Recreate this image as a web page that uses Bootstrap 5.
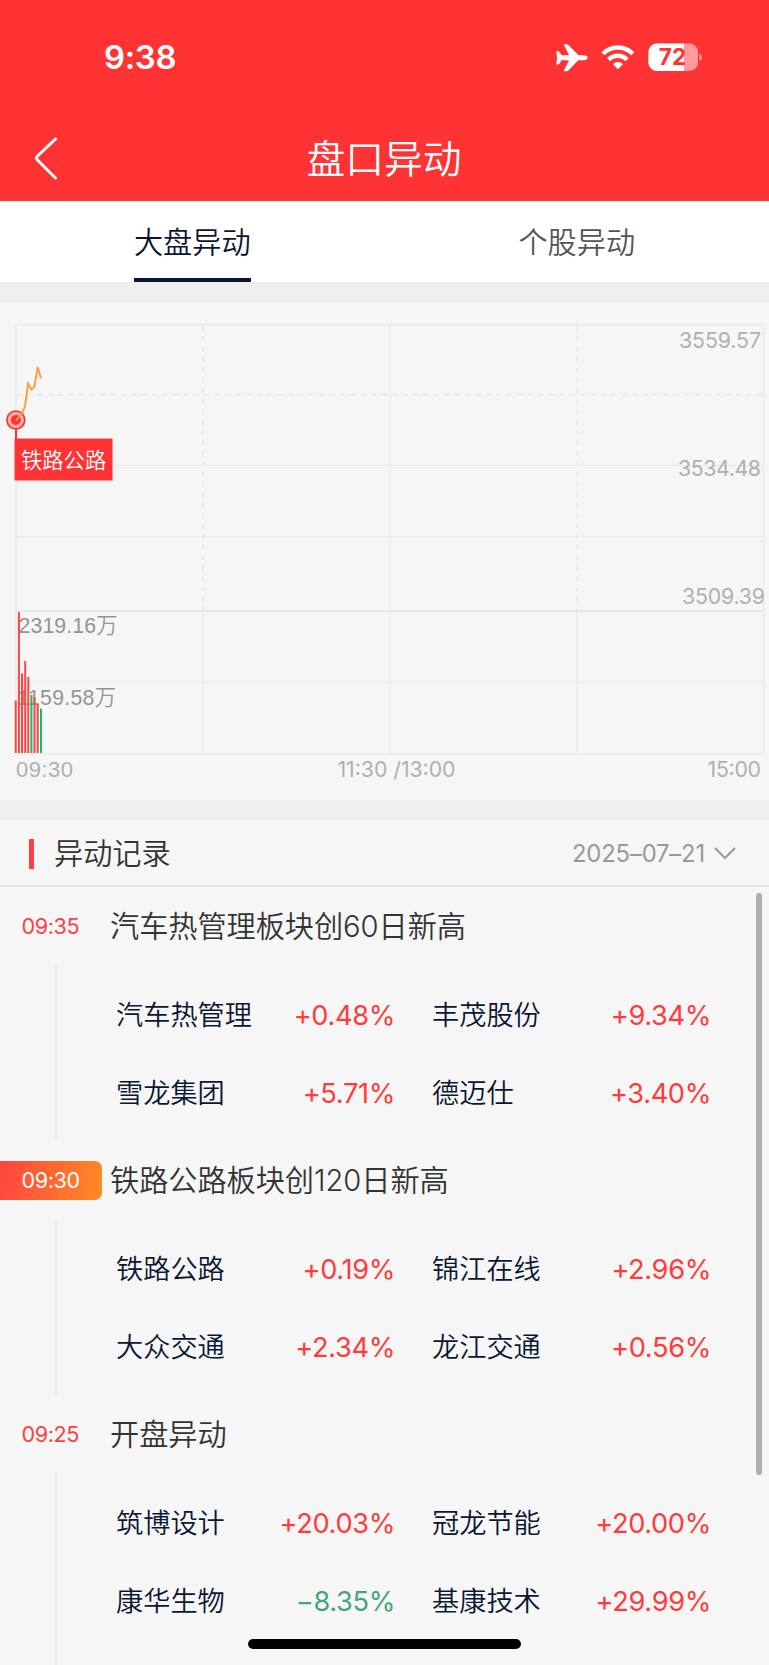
<!DOCTYPE html>
<html lang="zh-CN">
<head>
<meta charset="utf-8">
<meta name="viewport" content="width=device-width, initial-scale=1">
<title>盘口异动</title>
<link href="https://cdn.jsdelivr.net/npm/bootstrap@5.3.0/dist/css/bootstrap.min.css" rel="stylesheet">
<style>
  body { font-family: Inter, "Noto Sans CJK SC", sans-serif; background: #f6f6f6; color: #333; height: 1665px; overflow: hidden; line-height: 1; }
  .top-area { background: #f33; height: 201px; }
  .status-bar { height: 115px; padding: 0 67px 0 104px; }
  .clock { font-size: 32.8px; font-weight: 600; letter-spacing: -.3px; }
  .title-bar { height: 86px; }
  .title-bar h1 { font-size: 38.8px; font-weight: 350; margin: 2px 1px 0 0; }
  .back-btn { left: 33px; top: 20px; }
  .tab-strip { height: 81px; }
  .tab-strip .nav-link { font-size: 29.2px; color: #555; padding: 0; font-weight: 350; border-bottom: 4px solid transparent; height: 81px; line-height: 83px; }
  .tab-strip .nav-link.active { color: #0b1633; border-color: #0b1633; }
  .band { height: 20px; background: #efefef; }
  .chart-box { height: 498px; }
  .chart-box svg { display: block; }
  .log-head { height: 67px; border-bottom: 2px solid #e3e3e3; padding: 2px 33px 0 29px; }
  .log-head h2 { font-size: 29.2px; font-weight: 350; margin: 0 0 0 20px; }
  .accent { width: 5px; height: 30px; background: #ff4040; }
  .date-pick { font-size: 23.8px; font-weight: 400; letter-spacing: -.15px; color: #999; gap: 9px; }
  .log-list { height: 778px; }
  .event-head { height: 78px; }
  .time-tag { width: 102px; height: 39px; line-height: 39px; padding-left: 21.5px; font-size: 21.6px; letter-spacing: -.4px; font-weight: 400; color: #ff4040; border-radius: 0 7px 7px 0; }
  .time-tag.current { background: linear-gradient(100deg, #ff453f, #ff8a25); color: #fff; }
  .event-head h3 { font-size: 29.2px; font-weight: 350; letter-spacing: -.05px; margin: 2px 0 0 8px; }
  .event-body { height: 176px; margin-left: 55px; border-left: 2px solid #ececec; padding: 12px 0 0 59px; }
  .stock { height: 78px; font-size: 27.2px; font-weight: 350; color: #0b1633; }
  .stock-l { width: 279px; }
  .stock-r { width: 316px; padding-left: 37px; }
  .up, .down { font-weight: 400; letter-spacing: -.35px; color: #ff3b3b; }
  .down { color: #44a678; }
  .scroll-thumb { width: 6px; height: 582px; top: 6px; right: 7px; background: #aeaeae; border-radius: 3px; }
  .home-line { width: 273px; height: 10px; bottom: 16px; left: 248px; background: #000; border-radius: 5px; }
</style>
</head>
<body class="position-relative">
<header class="top-area text-white">
  <div class="status-bar d-flex align-items-center justify-content-between">
    <span class="clock">9:38</span>
    <svg width="150" height="32" viewBox="552 42 150 32" fill="#fff">
      <path d="M556.300 51h1.700q.7 0 1.200.7l2.600 3.600 7.200-.4-5-9.700q-.4-1 .6-1h2.400q.8 0 1.400.7l9.800 10.200 5.600.1c2.400 0 3.900 1.100 3.900 2.500s-1.500 2.500-3.900 2.500l-5.600.1-9.800 10.200q-.6.700-1.400.7h-2.400q-1 0-.6-1l5-9.700-7.200-.4-2.600 3.600q-.5.700-1.200.7h-1.700l.7-6.700z"/>
      <g fill="none" stroke="#fff" stroke-width="4.400">
        <path d="M603 53.700a21 21 0 0 1 29.700 0"/>
        <path d="M608.600 59.600a13 13 0 0 1 18.500 0"/>
      </g>
      <path d="M617.900 69.200l-5-5a7 7 0 0 1 10 0z"/>
      <rect x="648.500" y="43.500" width="49.500" height="27.500" rx="8.500" fill="#ff9b9b"/>
      <path d="M657 43.500h27V71h-27a8.500 8.500 0 0 1-8.500-8.500V52a8.500 8.500 0 0 1 8.500-8.500z"/>
      <path d="M699.300 53.500c3.500 1 3.500 6.500 0 7.500z" fill="#ff9b9b"/>
      <text x="672.500" y="65.300" font-size="22.500" font-weight="700" fill="#f33" text-anchor="middle">72</text>
    </svg>
  </div>
  <div class="title-bar position-relative d-flex align-items-center justify-content-center">
    <svg class="back-btn position-absolute" width="28" height="46" fill="none" stroke="#fff" stroke-width="3" stroke-linecap="round" stroke-linejoin="round"><path d="M22.500 4 4.500 21q-2 2 0 4L22.500 43"/></svg>
    <h1>盘口异动</h1>
  </div>
</header>

<nav class="nav tab-strip bg-white">
  <div class="nav-item w-50 d-flex justify-content-center"><a class="nav-link active" href="#">大盘异动</a></div>
  <div class="nav-item w-50 d-flex justify-content-center"><a class="nav-link" href="#">个股异动</a></div>
</nav>
<div class="band"></div>

<section class="chart-box">
  <svg width="769" height="498" viewBox="0 302 769 498">
    <g fill="none" stroke="#e8e8e8" stroke-width="1.200">
      <rect x="16" y="324.500" width="747.500" height="429.500"/>
      <path d="M16 465.500H763M16 536.500H763M16 682H763M390 325V754M203 611V754M577 611V754"/>
      <path d="M16 611H763" stroke-width="2"/>
      <path d="M16 395H763M203 325V611M577 325V611" stroke-width="1.800" stroke="#ebebeb" stroke-dasharray="6 5.500 4 5.500 6 4.300"/>
    </g>
    <g font-size="21.300" fill="#b0b0b0" font-weight="400" text-anchor="end">
      <text x="761" y="347.500" textLength="82">3559.57</text>
      <text x="761" y="475.500" textLength="83">3534.48</text>
      <text x="765" y="604" textLength="83">3509.39</text>
      <text x="761" y="777" textLength="53.500">15:00</text>
    </g>
    <text x="396.500" y="777" font-size="21.300" font-weight="400" fill="#b0b0b0" text-anchor="middle" textLength="118">11:30 /13:00</text>
    <g font-family="'Liberation Sans','Noto Sans CJK SC',sans-serif" font-size="21.300" fill="#949494">
      <text x="18.500" y="633" textLength="99">2319.16<tspan font-weight="350">万</tspan></text>
      <text x="17.500" y="705" textLength="98.500">1159.58<tspan font-weight="350">万</tspan></text>
      <text x="16" y="777" font-size="22" fill="#b0b0b0" textLength="57">09:30</text>
    </g>
    <g stroke-width="2" stroke="#ff4444">
      <path d="M15.700 753V700.500M18.900 753V612M22 753V673.500M25.200 753V661M28.300 753V677M34.500 753V697M37.700 753V704"/>
      <path stroke="#07c070" d="M31.400 753V695M41 753V708.500"/>
    </g>
    <g fill="#f33">
      <path d="M15 420h2v20h-2z"/>
      <circle cx="15.800" cy="420" r="9.800"/>
      <circle cx="15.800" cy="420" r="8" fill="#ffb3b3"/>
      <circle cx="15.800" cy="420" r="5"/>
      <rect x="14.500" y="438.500" width="98" height="42"/>
    </g>
    <path d="M16 420.500 22.500 412 25 406.500 28 383.500 31.500 389.500 34.500 386.500 37.700 367 41 378.500" fill="none" stroke="#ff9c3c" stroke-width="1.900"/>
    <text x="21" y="467.500" font-size="21.300" font-weight="350" fill="#fff">铁路公路</text>
  </svg>
</section>
<div class="band"></div>

<section>
  <div class="log-head d-flex align-items-center">
    <span class="accent"></span><h2>异动记录</h2>
    <div class="date-pick ms-auto d-flex align-items-center"><span>2025–07–21</span>
      <svg width="22" height="13" fill="none" stroke="#999" stroke-width="2"><path d="M1 1 11 11 21 1"/></svg>
    </div>
  </div>
  <div class="log-list position-relative overflow-hidden">
    <article>
      <div class="event-head d-flex align-items-center"><span class="time-tag">09:35</span><h3>汽车热管理板块创60日新高</h3></div>
      <div class="event-body d-flex flex-wrap align-content-start">
        <div class="stock stock-l d-flex align-items-center justify-content-between"><span>汽车热管理</span><span class="up">+0.48%</span></div>
        <div class="stock stock-r d-flex align-items-center justify-content-between"><span>丰茂股份</span><span class="up">+9.34%</span></div>
        <div class="stock stock-l d-flex align-items-center justify-content-between"><span>雪龙集团</span><span class="up">+5.71%</span></div>
        <div class="stock stock-r d-flex align-items-center justify-content-between"><span>德迈仕</span><span class="up">+3.40%</span></div>
      </div>
    </article>
    <article>
      <div class="event-head d-flex align-items-center"><span class="time-tag current">09:30</span><h3>铁路公路板块创120日新高</h3></div>
      <div class="event-body d-flex flex-wrap align-content-start">
        <div class="stock stock-l d-flex align-items-center justify-content-between"><span>铁路公路</span><span class="up">+0.19%</span></div>
        <div class="stock stock-r d-flex align-items-center justify-content-between"><span>锦江在线</span><span class="up">+2.96%</span></div>
        <div class="stock stock-l d-flex align-items-center justify-content-between"><span>大众交通</span><span class="up">+2.34%</span></div>
        <div class="stock stock-r d-flex align-items-center justify-content-between"><span>龙江交通</span><span class="up">+0.56%</span></div>
      </div>
    </article>
    <article>
      <div class="event-head d-flex align-items-center"><span class="time-tag">09:25</span><h3>开盘异动</h3></div>
      <div class="event-body d-flex flex-wrap align-content-start h-auto pb-5">
        <div class="stock stock-l d-flex align-items-center justify-content-between"><span>筑博设计</span><span class="up">+20.03%</span></div>
        <div class="stock stock-r d-flex align-items-center justify-content-between"><span>冠龙节能</span><span class="up">+20.00%</span></div>
        <div class="stock stock-l d-flex align-items-center justify-content-between"><span>康华生物</span><span class="down">−8.35%</span></div>
        <div class="stock stock-r d-flex align-items-center justify-content-between"><span>基康技术</span><span class="up">+29.99%</span></div>
      </div>
    </article>
    <div class="scroll-thumb position-absolute"></div>
  </div>
</section>
<div class="home-line position-absolute"></div>
<script src="https://cdn.jsdelivr.net/npm/bootstrap@5.3.0/dist/js/bootstrap.bundle.min.js"></script>
</body>
</html>
